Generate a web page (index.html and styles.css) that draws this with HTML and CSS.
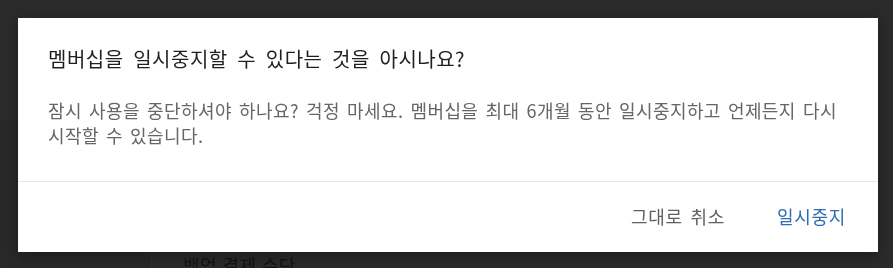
FILE: index.html
```html
<!DOCTYPE html>
<html lang="ko">
<head>
<meta charset="utf-8">
<title>멤버십 일시중지</title>
<link rel="stylesheet" href="styles.css">
</head>
<body>
<div class="page">
  <header class="topbar"></header>
  <div class="page-body">
    <aside class="sidebar"></aside>
    <main class="main">
      <div class="under-text">백업 결제 수단</div>
    </main>
  </div>
</div>
<div class="scrim">
  <div class="dialog" role="dialog">
    <div class="dialog-content">
      <h2 class="dialog-title">멤버십을 일시중지할 수 있다는 것을 아시나요?</h2>
      <p class="dialog-body">잠시 사용을 중단하셔야 하나요? 걱정 마세요. 멤버십을 최대 6개월 동안 일시중지하고 언제든지 다시 시작할 수 있습니다.</p>
    </div>
    <div class="dialog-actions">
      <button class="btn btn-cancel">그대로 취소</button>
      <button class="btn btn-confirm">일시중지</button>
    </div>
  </div>
</div>
</body>
</html>
```
FILE: styles.css
```css
html, body {
  margin: 0;
  padding: 0;
  height: 100%;
}
body {
  background: #2b2b2b;
  font-family: "Noto Sans CJK KR", "Noto Sans", sans-serif;
  overflow: hidden;
}
.page {
  display: flex;
  flex-direction: column;
  height: 100%;
}
.topbar {
  height: 120px;
  flex: none;
  background: #2b2b2b;
}
.page-body {
  flex: 1;
  display: flex;
}
.sidebar {
  width: 151px;
  flex: none;
  background: #292929;
  border-right: 1px solid #303030;
}
.main {
  flex: 1;
  padding: 133px 0 0 31px;
  background: #2b2b2b;
}
.under-text {
  font-size: 18px;
  line-height: 24px;
  color: #121212;
  letter-spacing: 0.4px;
}
.scrim {
  position: fixed;
  inset: 0;
  padding: 18px;
}
.dialog {
  width: 860px;
  height: 234px;
  background: #ffffff;
  box-shadow: 0 4px 14px rgba(0, 0, 0, 0.35);
  display: flex;
  flex-direction: column;
}
.dialog-content {
  padding: 27px 30px 0 30px;
  height: 136px;
  border-bottom: 1px solid #e6e6e6;
}
.dialog-title {
  margin: 0;
  font-size: 20px;
  line-height: 28px;
  font-weight: 400;
  color: #1f1f1f;
  letter-spacing: 0.5px;
  word-spacing: 3.5px;
}
.dialog-body {
  margin: 25px 0 0 0;
  font-size: 18px;
  line-height: 25px;
  color: #666666;
  letter-spacing: 0.4px;
  word-spacing: 1.7px;
}
.dialog-actions {
  flex: 1;
  display: flex;
  justify-content: flex-end;
  align-items: center;
  gap: 52px;
  padding: 0 32px 3px 0;
}
.btn {
  border: 0;
  background: none;
  padding: 0;
  font-family: inherit;
  font-size: 18px;
  line-height: 24px;
  letter-spacing: 0.7px;
  word-spacing: 2px;
  cursor: pointer;
}
.btn-cancel {
  color: #606060;
}
.btn-confirm {
  color: #2f6db5;
}
```
